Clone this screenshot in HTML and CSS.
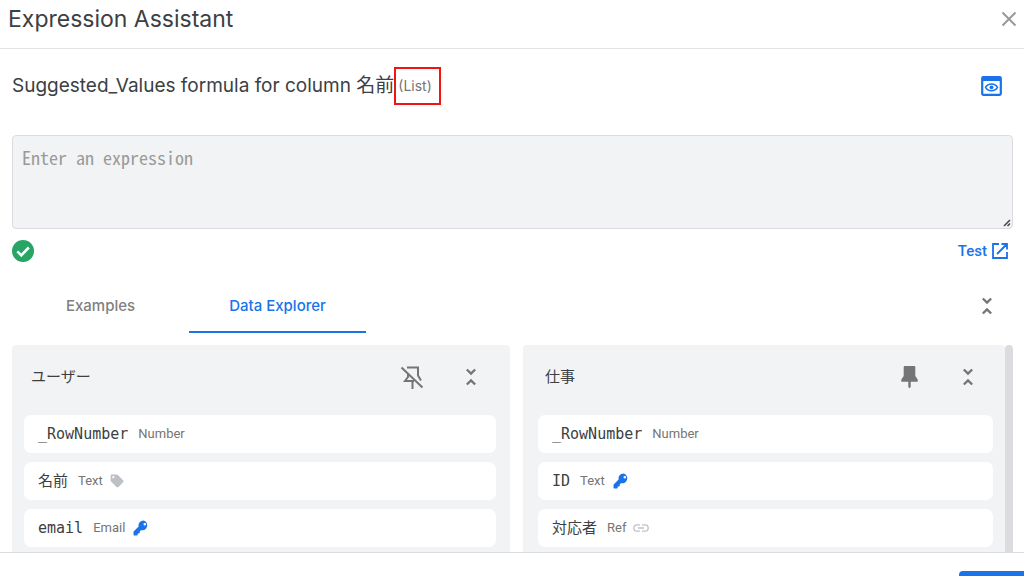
FILE: index.html
```
<!DOCTYPE html>
<html lang="en">
<head>
<meta charset="utf-8">
<meta name="viewport" content="width=device-width, initial-scale=1">
<title>Expression Assistant</title>
<link rel="stylesheet" href="styles.css">
</head>
<body>
<svg class="defs" aria-hidden="true">
  <symbol id="collapse" viewBox="0 0 24 24"><path d="M7 3l5 5 5-5M7 21l5-5 5 5" fill="none" stroke="currentColor" stroke-width="2.800"/></symbol>
  <symbol id="key" viewBox="0 0 16 16"><path d="M10.500 .5a5 5 0 0 0-4.900 6.100L.9 11.300a1.500 1.500 0 0 0-.4 1.100v2.100c0 .6.400 1 1 1h2.300c.5 0 .9-.4.9-.9v-1.200h1.200c.5 0 .9-.4.9-.9v-1.200l1.200-1.100a5 5 0 1 0 2.500-9.700zm1.300 2.500a1.300 1.300 0 1 1 0 2.600 1.300 1.300 0 0 1 0-2.600z" fill="currentColor" fill-rule="evenodd"/></symbol>
</svg>
<div class="dialog">
  <header class="dialog-header">
    <h1 class="dialog-title">Expression Assistant</h1>
    <button class="icon-button" aria-label="Close"><svg class="icon-close" viewBox="0 0 16 16"><path d="M1.500 1.500l13 13M14.500 1.500l-13 13" fill="none" stroke="currentColor" stroke-width="2"/></svg></button>
  </header>
  <main class="dialog-body">
    <div class="formula-row">
      <h2 class="formula-title"><label for="expression">Suggested_Values formula for column 名前</label></h2>
      <span class="formula-type">(List)</span>
      <button class="icon-button preview" aria-label="Preview"><svg class="icon-preview" viewBox="0 0 21 20"><rect x="1.200" y="1.200" width="18.600" height="17.600" rx="1" fill="none" stroke="currentColor" stroke-width="2.200"/><path d="M1 1h19v4H1z" fill="currentColor"/><path d="M4.500 11.300c2.600-4.500 9.400-4.500 12 0-2.600 4.500-9.400 4.500-12 0z" fill="none" stroke="currentColor" stroke-width="1.500"/><circle cx="10.500" cy="11.300" r="1.900" fill="currentColor"/></svg></button>
    </div>
    <div class="editor">
      <textarea class="expression" id="expression" placeholder="Enter an expression"></textarea>
      <svg class="grip" viewBox="0 0 8 8" aria-hidden="true"><path d="M1 7l6-6M4.500 7L7 4.500" stroke="currentColor" stroke-width="1.500"/></svg>
    </div>
    <div class="status-row">
      <svg class="icon-ok" viewBox="0 0 22 22" role="img" aria-label="Valid"><circle cx="11" cy="11" r="11" fill="#26a564"/><path d="M5.300 11.300l4 4 7.500-7.800" fill="none" stroke="#fff" stroke-width="2.600"/></svg>
      <a class="test-link" href="#test">Test<svg class="icon-open" viewBox="0 0 16 16"><path d="M7 1H1v14h14V9M9.500 1H15v5.500M15 1L5 11" fill="none" stroke="currentColor" stroke-width="1.800"/></svg></a>
    </div>
    <div class="tabs-row">
      <div class="tabs" role="tablist">
        <button class="tab" role="tab" aria-selected="false">Examples</button>
        <button class="tab tab-active" role="tab" aria-selected="true">Data Explorer</button>
      </div>
      <button class="icon-button collapse-all" aria-label="Collapse all"><svg class="icon-collapse"><use href="#collapse"/></svg></button>
    </div>
    <div class="explorer">
      <div class="panels">
        <section class="panel panel-first">
          <div class="panel-header">
            <h3 class="panel-title">ユーザー</h3>
            <button class="icon-button" aria-label="Pin"><svg class="icon-pin" viewBox="0 0 24 24"><path d="M7 2.500h11v8l3 5M8 9v3l-3 4h9M12.500 16v8M1.500 2.500l21 20" fill="none" stroke="currentColor" stroke-width="2"/></svg></button>
            <button class="icon-button" aria-label="Collapse"><svg class="icon-collapse"><use href="#collapse"/></svg></button>
          </div>
          <ul class="fields">
            <li class="field"><span class="field-name">_RowNumber</span><span class="field-type">Number</span></li>
            <li class="field"><span class="field-name">名前</span><span class="field-type">Text</span><svg class="icon-tag" viewBox="0 0 14 14"><path d="M1.500.5h5.300c.4 0 .8.200 1.100.5l5.200 5.300c.6.600.6 1.400 0 2l-4.600 4.600c-.6.600-1.400.6-2 0L1.100 7.600A1.500 1.500 0 0 1 .6 6.500v-5c0-.6.300-1 .9-1zM3.300 2.100a1.100 1.100 0 1 0 0 2.200 1.100 1.100 0 0 0 0-2.200z" fill="currentColor" fill-rule="evenodd"/></svg></li>
            <li class="field"><span class="field-name">email</span><span class="field-type">Email</span><svg class="icon-key"><use href="#key"/></svg></li>
          </ul>
        </section>
        <section class="panel panel-second">
          <div class="panel-header">
            <h3 class="panel-title">仕事</h3>
            <button class="icon-button" aria-label="Unpin"><svg class="icon-pin" viewBox="0 0 24 24"><path d="M8 1h9c.8 0 1.300.5 1.300 1.300V11l2.400 3.500v2.300h-7V22l-1.200 1.200-1.200-1.200v-5.200H4.300v-2.300L6.700 11V2.300C6.700 1.500 7.200 1 8 1z" fill="currentColor"/></svg></button>
            <button class="icon-button" aria-label="Collapse"><svg class="icon-collapse"><use href="#collapse"/></svg></button>
          </div>
          <ul class="fields">
            <li class="field"><span class="field-name">_RowNumber</span><span class="field-type">Number</span></li>
            <li class="field"><span class="field-name">ID</span><span class="field-type">Text</span><svg class="icon-key"><use href="#key"/></svg></li>
            <li class="field"><span class="field-name">対応者</span><span class="field-type">Ref</span><svg class="icon-link" viewBox="0 0 16 8"><path d="M7 .8H4a3.200 3.200 0 0 0 0 6.400h3M9 .8h3a3.200 3.200 0 0 1 0 6.400H9M5 4h6" fill="none" stroke="currentColor" stroke-width="1.300"/></svg></li>
          </ul>
        </section>
      </div>
      <div class="scroll-thumb"></div>
    </div>
  </main>
  <footer class="dialog-footer">
    <button class="save" aria-label="Save"></button>
  </footer>
</div>
</body>
</html>
```
FILE: styles.css
```
* { box-sizing: border-box; }

body {
  margin: 0;
  height: 100vh;
  overflow: hidden;
  background: #fff;
  color: #3c4043;
  font-family: Inter, "Noto Sans CJK JP", sans-serif;
}

h1, h2, h3, ul { margin: 0; padding: 0; font-weight: 400; }
button { padding: 0; border: 0; background: none; font: inherit; color: inherit; }
svg { display: block; flex: none; }
.defs { position: absolute; width: 0; height: 0; }

/* The footer continues below the visible part of the window. */
.dialog { display: flex; flex-direction: column; height: calc(100vh + 48px); }

.dialog-header {
  flex: none;
  display: flex;
  align-items: center;
  justify-content: space-between;
  padding: 0 7px 10px 8px;
  border-bottom: 1px solid #e0e2e4;
}
.dialog-title { font-size: 23px; line-height: 38px; }
.icon-button { display: flex; align-items: center; justify-content: center; color: #757575; }
.icon-close { width: 16px; height: 16px; color: #999; }

.dialog-body { flex: 1; min-height: 0; overflow: hidden; padding: 0 11px 0 12px; display: flex; flex-direction: column; }

.formula-row { display: flex; align-items: center; padding: 18px 11px 30px 0; }
.formula-title { font-size: 19px; line-height: 36px; white-space: nowrap; }
.formula-type {
  padding: 0 7px 0 2px;
  border: 2px solid #f01414;
  font-size: 14px;
  line-height: 34px;
  color: #757575;
}
.preview { margin-left: auto; color: #1a73e8; }
.icon-preview { width: 21px; height: 20px; }

.editor { position: relative; display: flex; }
.expression {
  flex: 1;
  height: 94px;
  padding: 11px 9px;
  border: 1px solid #dadce0;
  border-radius: 4px;
  background: #f1f3f4;
  resize: none;
  font-family: "Noto Sans Mono CJK JP", "Liberation Mono", monospace;
  font-size: 18px;
  line-height: 20px;
}
.expression::placeholder { color: #9a9a9a; opacity: 1; }
.grip { position: absolute; right: 2px; bottom: 2px; width: 8px; height: 8px; color: #444; }

.status-row { display: flex; align-items: center; justify-content: space-between; padding: 10px 5px 0 0; }
.icon-ok { width: 22px; height: 22px; }
.test-link {
  display: flex;
  align-items: center;
  gap: 5px;
  color: #1a73e8;
  font-family: Roboto, sans-serif;
  font-weight: 500;
  font-size: 15px;
  line-height: 24px;
  text-decoration: none;
}
.icon-open { width: 16px; height: 16px; }

.tabs-row { display: flex; align-items: center; justify-content: space-between; padding-top: 16px; }
.tabs { display: flex; }
.tab {
  min-width: 177px;
  height: 54px;
  border-bottom: 2px solid transparent;
  font-weight: 500;
  font-size: 15px;
  color: #808080;
}
.tab-active { border-color: #1a73e8; color: #1a73e8; }
.collapse-all { padding-right: 16px; }
.icon-collapse { width: 20px; height: 20px; }

.explorer { flex: 1; min-height: 0; display: flex; padding-top: 12px; }
.panels { flex: 1; display: grid; grid-template-columns: 498fr 482fr; gap: 13px; }
.panel { background: #f1f3f4; border-radius: 4px 4px 0 0; }
.panel-first { padding: 0 14px 0 12px; }
.panel-second { padding: 0 12px 0 15px; }
.panel-header { display: flex; align-items: center; gap: 37px; height: 70px; padding: 0 15px 6px 7px; }
.panel-title { flex: 1; font-size: 15px; line-height: 24px; }
.icon-pin { width: 24px; height: 24px; }
.fields { display: flex; flex-direction: column; gap: 9px; list-style: none; }
.field { display: flex; align-items: center; height: 38px; padding: 0 14px; border-radius: 7px; background: #fff; }
.field-name { font-family: "DejaVu Sans Mono", "Noto Sans CJK JP", monospace; font-size: 15px; line-height: 24px; }
.field-type { margin-left: 10px; font-family: Roboto, sans-serif; font-size: 13px; line-height: 20px; color: #757575; }
.icon-tag { width: 14px; height: 14px; margin-left: 7px; color: #bdc1c6; }
.icon-key { width: 16px; height: 16px; margin-left: 8px; color: #1a73e8; }
.icon-link { width: 16px; height: 8px; margin-left: 7px; color: #bdc1c6; }
.scroll-thumb { flex: none; width: 8px; border-radius: 4px 4px 0 0; background: #dadce0; }

.dialog-footer {
  flex: none;
  display: flex;
  justify-content: flex-end;
  padding: 18px 0 17px;
  border-top: 1px solid #dadce0;
  background: #fff;
}
.save { width: 80px; height: 36px; margin-right: -15px; border-radius: 4px; background: #1a73e8; }
```
